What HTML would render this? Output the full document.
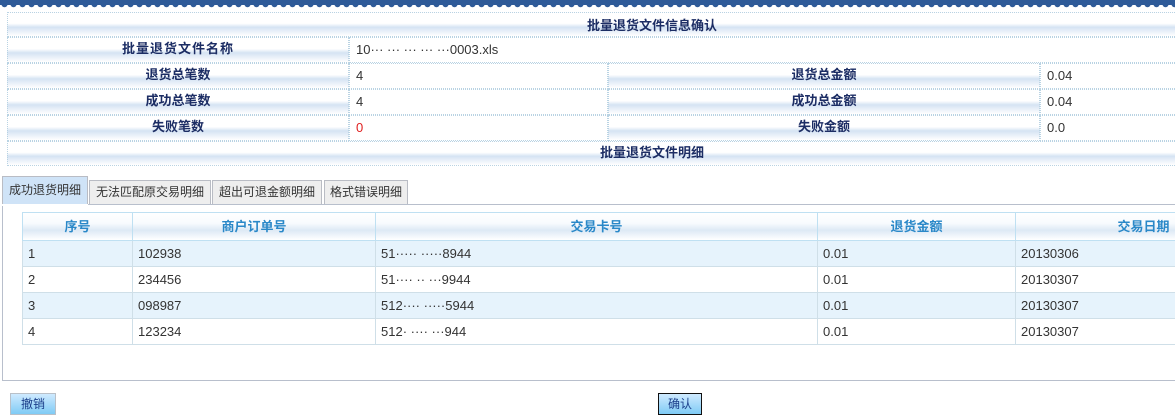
<!DOCTYPE html>
<html><head><meta charset="utf-8"><style>
*{margin:0;padding:0;box-sizing:border-box}
body{width:1175px;height:418px;background:#fff;position:relative;overflow:hidden;font-family:"Liberation Sans","Noto Sans CJK SC",sans-serif;font-size:13px;color:#222}
.a{position:absolute}
.g{background:linear-gradient(#fff 0%,#fff 45%,#d5e3f3 62%,#fff 100%);border:1px dotted #b9d3e3;color:#1c2d64;font-weight:bold;text-align:center;font-size:13px}
.v{border:1px dotted #b9d3e3;padding-left:6px;font-size:13px;color:#333}
.tab{position:absolute;top:180px;height:24px;border:1px solid #b9bcc4;border-bottom:none;background:#eee;font-size:12px;color:#333;text-align:center;line-height:22px}
.th{position:absolute;top:212px;height:29px;line-height:29px;text-align:center;color:#2a88c8;font-weight:bold;font-size:13px;background:linear-gradient(#fff 0%,#f8fbfe 40%,#dde9f5 65%,#fff 100%);border-left:1px solid #bfe0f2;border-bottom:1px solid #bfe0f2}
.td{position:absolute;height:26px;line-height:26px;padding-left:5px;border-left:1px solid #cfdfe8;border-bottom:1px solid #cfdfe8;color:#333}
.btn{position:absolute;top:393px;height:22px;font-size:12px;color:#1b3e8a;text-align:center;line-height:20px;background:linear-gradient(#cfeaff,#7fcbf5)}
</style></head><body>
<svg class="a" style="left:0;top:0" width="1175" height="8"><rect width="1175" height="5" fill="#2e5a98"/>
<pattern id="p" width="9" height="8" patternUnits="userSpaceOnUse"><circle cx="4.5" cy="4" r="3.2" fill="#2e5a98"/></pattern><rect width="1175" height="8" fill="url(#p)"/></svg>

<div class="a g" style="left:7px;top:12px;width:1290px;height:25px;line-height:25px">批量退货文件信息确认</div>
<div class="a g" style="left:7px;top:37px;width:342px;height:26px;line-height:22px;letter-spacing:1px">批量退货文件名称</div>
<div class="a v" style="left:349px;top:37px;width:948px;height:26px;line-height:24px">10··· ··· ··· ··· ···0003.xls</div>

<div class="a g" style="left:7px;top:63px;width:342px;height:26px;line-height:22px">退货总笔数</div>
<div class="a v" style="left:349px;top:63px;width:259px;height:26px;line-height:24px">4</div>
<div class="a g" style="left:608px;top:63px;width:432px;height:26px;line-height:22px">退货总金额</div>
<div class="a v" style="left:1040px;top:63px;width:257px;height:26px;line-height:24px">0.04</div>

<div class="a g" style="left:7px;top:89px;width:342px;height:26px;line-height:22px">成功总笔数</div>
<div class="a v" style="left:349px;top:89px;width:259px;height:26px;line-height:24px">4</div>
<div class="a g" style="left:608px;top:89px;width:432px;height:26px;line-height:22px">成功总金额</div>
<div class="a v" style="left:1040px;top:89px;width:257px;height:26px;line-height:24px">0.04</div>

<div class="a g" style="left:7px;top:115px;width:342px;height:26px;line-height:22px">失败笔数</div>
<div class="a v" style="left:349px;top:115px;width:259px;height:26px;line-height:24px;color:#e02020">0</div>
<div class="a g" style="left:608px;top:115px;width:432px;height:26px;line-height:22px">失败金额</div>
<div class="a v" style="left:1040px;top:115px;width:257px;height:26px;line-height:24px">0.0</div>

<div class="a g" style="left:7px;top:141px;width:1290px;height:25px;line-height:22px">批量退货文件明细</div>

<div class="tab" style="left:2px;top:176px;height:28px;width:86px;background:#cfe3f7;line-height:26px">成功退货明细</div>
<div class="tab" style="left:89px;width:122px">无法匹配原交易明细</div>
<div class="tab" style="left:212px;width:110px">超出可退金额明细</div>
<div class="tab" style="left:324px;width:84px">格式错误明细</div>

<div class="a" style="left:2px;top:204px;width:1180px;height:177px;border:1px solid #b8bfcc"></div>
<div class="a" style="left:2px;top:204px;width:86px;height:2px;background:#fff"></div>

<div class="th" style="left:22px;width:110px">序号</div>
<div class="th" style="left:132px;width:243px">商户订单号</div>
<div class="th" style="left:375px;width:442px">交易卡号</div>
<div class="th" style="left:817px;width:198px">退货金额</div>
<div class="th" style="left:1015px;width:256px">交易日期</div>
<div class="a" style="left:22px;top:212px;width:1153px;height:1px;background:#bfe0f2"></div>

<div class="a" style="left:22px;top:241px;width:1153px;height:26px;background:#e6f3fc"></div>
<div class="a" style="left:22px;top:293px;width:1153px;height:26px;background:#e6f3fc"></div>

<div class="td" style="left:22px;top:241px;width:110px">1</div><div class="td" style="left:132px;top:241px;width:243px">102938</div><div class="td" style="left:375px;top:241px;width:442px">51····· ·····8944</div><div class="td" style="left:817px;top:241px;width:198px">0.01</div><div class="td" style="left:1015px;top:241px;width:160px">20130306</div>
<div class="td" style="left:22px;top:267px;width:110px">2</div><div class="td" style="left:132px;top:267px;width:243px">234456</div><div class="td" style="left:375px;top:267px;width:442px">51···· ·· ···9944</div><div class="td" style="left:817px;top:267px;width:198px">0.01</div><div class="td" style="left:1015px;top:267px;width:160px">20130307</div>
<div class="td" style="left:22px;top:293px;width:110px">3</div><div class="td" style="left:132px;top:293px;width:243px">098987</div><div class="td" style="left:375px;top:293px;width:442px">512···· ·····5944</div><div class="td" style="left:817px;top:293px;width:198px">0.01</div><div class="td" style="left:1015px;top:293px;width:160px">20130307</div>
<div class="td" style="left:22px;top:319px;width:110px">4</div><div class="td" style="left:132px;top:319px;width:243px">123234</div><div class="td" style="left:375px;top:319px;width:442px">512· ···· ···944</div><div class="td" style="left:817px;top:319px;width:198px">0.01</div><div class="td" style="left:1015px;top:319px;width:160px">20130307</div>

<div class="btn" style="left:10px;width:46px;border:1px solid #b9c0c8">撤销</div>
<div class="btn" style="left:658px;width:44px;border:1px solid #111">确认</div>
</body></html>
